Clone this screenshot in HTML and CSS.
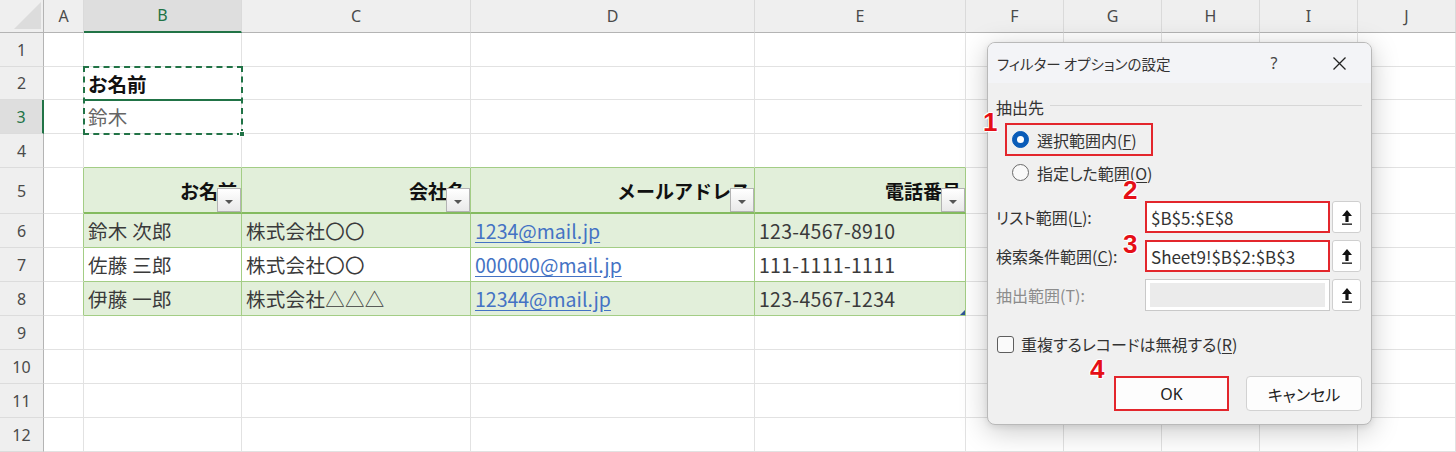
FILE: index.html
```html
<!DOCTYPE html>
<html lang="ja">
<head>
<meta charset="utf-8">
<title>フィルター オプションの設定</title>
<link rel="stylesheet" href="styles.css">
</head>
<body>
<div class="sheet">
  <div class="ch corner"><span class="tri"></span></div>
  <div class="ch">A</div>
  <div class="ch sel">B</div>
  <div class="ch">C</div>
  <div class="ch">D</div>
  <div class="ch">E</div>
  <div class="ch">F</div>
  <div class="ch">G</div>
  <div class="ch">H</div>
  <div class="ch">I</div>
  <div class="ch">J</div>

  <div class="rh">1</div>
  <div class="c"></div><div class="c"></div><div class="c"></div><div class="c"></div><div class="c"></div>
  <div class="c"></div><div class="c"></div><div class="c"></div><div class="c"></div><div class="c"></div>

  <div class="rh">2</div>
  <div class="c"></div><div class="c b">お名前</div><div class="c"></div><div class="c"></div><div class="c"></div>
  <div class="c"></div><div class="c"></div><div class="c"></div><div class="c"></div><div class="c"></div>

  <div class="rh sel">3</div>
  <div class="c"></div><div class="c g">鈴木</div><div class="c"></div><div class="c"></div><div class="c"></div>
  <div class="c"></div><div class="c"></div><div class="c"></div><div class="c"></div><div class="c"></div>

  <div class="rh">4</div>
  <div class="c"></div><div class="c tb"></div><div class="c tb"></div><div class="c tb"></div><div class="c tb"></div>
  <div class="c"></div><div class="c"></div><div class="c"></div><div class="c"></div><div class="c"></div>

  <div class="rh">5</div>
  <div class="c tl"></div>
  <div class="c t th">お名前<span class="fb"><span class="fa"></span></span></div>
  <div class="c t th">会社名<span class="fb"><span class="fa"></span></span></div>
  <div class="c t th">メールアドレス<span class="fb"><span class="fa"></span></span></div>
  <div class="c t th">電話番号<span class="fb"><span class="fa"></span></span></div>
  <div class="c"></div><div class="c"></div><div class="c"></div><div class="c"></div><div class="c"></div>

  <div class="rh">6</div>
  <div class="c tl"></div>
  <div class="c t">鈴木 次郎</div>
  <div class="c t">株式会社〇〇</div>
  <div class="c t"><span class="lnk">1234@mail.jp</span></div>
  <div class="c t">123-4567-8910</div>
  <div class="c"></div><div class="c"></div><div class="c"></div><div class="c"></div><div class="c"></div>

  <div class="rh">7</div>
  <div class="c tl"></div>
  <div class="c t w">佐藤 三郎</div>
  <div class="c t w">株式会社〇〇</div>
  <div class="c t w"><span class="lnk">000000@mail.jp</span></div>
  <div class="c t w">111-1111-1111</div>
  <div class="c"></div><div class="c"></div><div class="c"></div><div class="c"></div><div class="c"></div>

  <div class="rh">8</div>
  <div class="c tl"></div>
  <div class="c t">伊藤 一郎</div>
  <div class="c t">株式会社△△△</div>
  <div class="c t"><span class="lnk">12344@mail.jp</span></div>
  <div class="c t end">123-4567-1234<span class="rsz"></span></div>
  <div class="c"></div><div class="c"></div><div class="c"></div><div class="c"></div><div class="c"></div>

  <div class="rh">9</div>
  <div class="c"></div><div class="c"></div><div class="c"></div><div class="c"></div><div class="c"></div>
  <div class="c"></div><div class="c"></div><div class="c"></div><div class="c"></div><div class="c"></div>

  <div class="rh">10</div>
  <div class="c"></div><div class="c"></div><div class="c"></div><div class="c"></div><div class="c"></div>
  <div class="c"></div><div class="c"></div><div class="c"></div><div class="c"></div><div class="c"></div>

  <div class="rh">11</div>
  <div class="c"></div><div class="c"></div><div class="c"></div><div class="c"></div><div class="c"></div>
  <div class="c"></div><div class="c"></div><div class="c"></div><div class="c"></div><div class="c"></div>

  <div class="rh">12</div>
  <div class="c"></div><div class="c"></div><div class="c"></div><div class="c"></div><div class="c"></div>
  <div class="c"></div><div class="c"></div><div class="c"></div><div class="c"></div><div class="c"></div>

  <div class="active"></div>
  <div class="marquee"></div>
  <div class="handle"></div>
</div>

<div class="dialog">
  <div class="dtitle">
    <span class="dname">フィルター オプションの設定</span>
    <span class="dhelp">?</span>
    <span class="dclose"><svg width="15" height="15" viewBox="0 0 15 15"><path d="M1.5 1.5L13.5 13.5M13.5 1.5L1.5 13.5" stroke="#222" stroke-width="1.3" fill="none"/></svg></span>
  </div>
  <div class="dbody">
    <div class="group"><span>抽出先</span><span class="gline"></span></div>
    <div class="opt hl"><span class="radio on"></span><span>選択範囲内(<u>F</u>)</span></div>
    <div class="opt"><span class="radio"></span><span>指定した範囲(<u>O</u>)</span></div>

    <div class="field first">
      <span class="lbl">リスト範囲(<u>L</u>):</span>
      <span class="inp hl">$B$5:$E$8</span>
      <span class="upb"><svg width="14" height="18" viewBox="0 0 14 18"><path d="M7 2L12 8H8.6V14H5.4V8H2Z" fill="#111"/><rect x="2" y="15.5" width="10" height="1.3" fill="#111"/></svg></span>
    </div>
    <div class="field">
      <span class="lbl">検索条件範囲(<u>C</u>):</span>
      <span class="inp hl">Sheet9!$B$2:$B$3</span>
      <span class="upb"><svg width="14" height="18" viewBox="0 0 14 18"><path d="M7 2L12 8H8.6V14H5.4V8H2Z" fill="#111"/><rect x="2" y="15.5" width="10" height="1.3" fill="#111"/></svg></span>
    </div>
    <div class="field">
      <span class="lbl dis">抽出範囲(T):</span>
      <span class="inp dis"><span class="disfill"></span></span>
      <span class="upb"><svg width="14" height="18" viewBox="0 0 14 18"><path d="M7 2L12 8H8.6V14H5.4V8H2Z" fill="#111"/><rect x="2" y="15.5" width="10" height="1.3" fill="#111"/></svg></span>
    </div>

    <div class="chk"><span class="box"></span><span>重複するレコードは無視する(<u>R</u>)</span></div>

    <div class="btns">
      <span class="btn ok">OK</span>
      <span class="btn">キャンセル</span>
    </div>
  </div>
</div>

<span class="num n1">1</span>
<span class="num n2">2</span>
<span class="num n3">3</span>
<span class="num n4">4</span>
</body>
</html>
```
FILE: styles.css
```css
* { box-sizing: border-box; margin: 0; padding: 0; }

body {
  width: 1456px;
  height: 452px;
  overflow: hidden;
  background: #fff;
  position: relative;
  font-family: "Noto Sans CJK JP", "Noto Sans", sans-serif;
  color: #333;
}

.sheet {
  display: grid;
  grid-template-columns: 44px 40px 158px 229px 284px 211px 98px 98px 98px 98px 98px;
  grid-template-rows: 33px 34px 33px 34px 34px 46px repeat(7, 34px);
  position: relative;
}

.ch {
  background: #efefef;
  border-right: 1px solid #dadada;
  border-bottom: 1px solid #b4b4b4;
  display: flex;
  align-items: center;
  justify-content: center;
  font-family: "Noto Sans", sans-serif;
  font-size: 16px;
  color: #4a4a4a;
  padding-bottom: 1px;
}
.ch.sel {
  background: #dedede;
  color: #217346;
  border-bottom: 2px solid #217346;
}
.ch.corner {
  align-items: flex-end;
  justify-content: flex-end;
  padding: 0 2px 3px 0;
  border-right: 1px solid #b4b4b4;
}
.tri {
  width: 27px;
  height: 27px;
  background: #dcdcdc;
  clip-path: polygon(100% 0, 100% 100%, 0 100%);
}

.rh {
  background: #efefef;
  border-right: 1px solid #b4b4b4;
  border-bottom: 1px solid #dcdcdc;
  display: flex;
  align-items: center;
  justify-content: center;
  font-family: "Noto Sans", sans-serif;
  font-size: 16px;
  color: #4a4a4a;
}
.rh.sel {
  background: #dedede;
  color: #217346;
  border-right: 2px solid #217346;
}

.c {
  border-right: 1px solid #e2e2e2;
  border-bottom: 1px solid #e2e2e2;
  display: flex;
  align-items: center;
  padding: 0 4px;
  font-size: 19.5px;
  letter-spacing: 0.3px;
  color: #3a3a3a;
  white-space: nowrap;
  position: relative;
}
.c.b { font-weight: bold; color: #111; letter-spacing: 0; }
.c.g { color: #666; }
.c.tb { border-bottom-color: #a3cd85; }
.c.tl { border-right-color: #a3cd85; }
.c.t {
  background: #e2efda;
  border-right-color: #a3cd85;
  border-bottom-color: #a3cd85;
}
.c.t.w { background: #fff; }
.c.th {
  font-weight: bold;
  font-size: 19px;
  letter-spacing: 0;
  color: #111;
  justify-content: flex-end;
  padding-right: 4px;
  border-bottom: 2px solid #84bb5f;
}
.fb {
  position: absolute;
  right: 0;
  bottom: 0;
  width: 24px;
  height: 24px;
  border: 1px solid #b3b3b3;
  background: linear-gradient(#ffffff, #e9e9e9);
  display: flex;
  align-items: center;
  justify-content: center;
}
.fa {
  width: 0;
  height: 0;
  border-left: 4px solid transparent;
  border-right: 4px solid transparent;
  border-top: 4px solid #555;
  margin-top: 3px;
}
.lnk {
  color: #4472c4;
  text-decoration: underline;
  text-underline-offset: 3px;
  letter-spacing: 0;
}
.rsz {
  position: absolute;
  right: 0;
  bottom: 0;
  width: 5px;
  height: 5px;
  background: #2f5597;
  clip-path: polygon(100% 0, 100% 100%, 0 100%);
}

.active {
  position: absolute;
  left: 83px;
  top: 99px;
  width: 160px;
  height: 2px;
  background: #217346;
}
.marquee {
  position: absolute;
  left: 83px;
  top: 66px;
  width: 160px;
  height: 69px;
  border: 2px dashed #217346;
}
.handle {
  position: absolute;
  left: 239px;
  top: 131px;
  width: 6px;
  height: 6px;
  background: #217346;
  border: 1px solid #fff;
}

/* dialog */
.dialog {
  position: absolute;
  left: 987px;
  top: 42px;
  width: 385px;
  height: 383px;
  background: #f0f0f0;
  border: 1px solid #b9b9b9;
  border-radius: 8px;
  box-shadow: 0 6px 28px rgba(0, 0, 0, 0.22), 0 2px 6px rgba(0, 0, 0, 0.08);
  overflow: hidden;
  font-size: 16px;
  color: #222;
  font-feature-settings: "palt";
}
.dtitle {
  height: 40px;
  background: #f3f4f7;
  display: flex;
  align-items: center;
  padding: 0 12px 0 9px;
}
.dname {
  flex: 1;
  font-size: 14.5px;
  color: #333;
}
.dhelp {
  width: 40px;
  text-align: center;
  font-family: "Noto Sans", sans-serif;
  font-size: 16px;
  color: #444;
  margin-right: 25px;
}
.dclose {
  width: 40px;
  display: flex;
  justify-content: center;
}
.dbody {
  display: flex;
  flex-direction: column;
  padding: 0 9px 0 8px;
}
.group {
  display: flex;
  align-items: center;
  height: 22px;
  margin-top: 13px;
  color: #333;
}
.gline {
  flex: 1;
  height: 1px;
  background: #d7d7d7;
  margin-left: 6px;
  margin-top: -4px;
}
.opt {
  display: flex;
  align-items: center;
  gap: 8px;
  height: 33px;
  margin-left: 9px;
  padding-left: 5px;
  border: 2px solid transparent;
  color: #333;
  white-space: nowrap;
}
.opt.hl { border-color: #e3262c; margin-top: 5px; width: 148px; }
.radio {
  width: 17px;
  height: 17px;
  border-radius: 50%;
  border: 1px solid #6a6a6a;
  background: #f9f9f9;
  display: flex;
  align-items: center;
  justify-content: center;
  flex: none;
}
.radio.on {
  background: #0a5cb8;
  border-color: #0a5cb8;
}
.radio.on::after {
  content: "";
  width: 7px;
  height: 7px;
  border-radius: 50%;
  background: #fff;
}
u { text-underline-offset: 2px; }

.field {
  display: flex;
  align-items: center;
  height: 32px;
  margin-top: 7px;
}
.field.first { margin-top: 12px; }
.lbl { width: 149px; color: #333; white-space: nowrap; }
.lbl.dis { color: #8c8c8c; }
.inp {
  width: 185px;
  height: 32px;
  background: #fff;
  border: 1px solid #c9c9c9;
  display: flex;
  align-items: center;
  padding-left: 4px;
  font-size: 17px;
  color: #333;
  white-space: nowrap;
}
.inp.hl { border: 2px solid #e3262c; }
.inp.dis { padding: 3px 4px; }
.disfill {
  display: block;
  width: 100%;
  height: 100%;
  background: #ebebeb;
}
.upb {
  width: 29px;
  height: 32px;
  margin-left: 2px;
  background: #fff;
  border: 1px solid #cfcfcf;
  border-radius: 3px;
  display: flex;
  align-items: center;
  justify-content: center;
}

.chk {
  display: flex;
  align-items: center;
  gap: 7px;
  height: 20px;
  margin-top: 23px;
  color: #333;
  white-space: nowrap;
}
.box {
  width: 17px;
  height: 17px;
  margin-left: 1px;
  border: 1px solid #5e5e5e;
  border-radius: 3px;
  background: #fafafa;
}

.btns {
  display: flex;
  justify-content: flex-end;
  gap: 17px;
  margin-top: 22px;
}
.btn {
  width: 116px;
  height: 35px;
  background: #fdfdfd;
  border: 1px solid #d2d2d2;
  border-radius: 4px;
  display: flex;
  align-items: center;
  justify-content: center;
  color: #222;
}
.btn.ok {
  width: 115px;
  border: 2px solid #e3262c;
  border-radius: 0;
  font-family: "Noto Sans", sans-serif;
}

.num {
  position: absolute;
  font-family: "Liberation Sans", Arial, sans-serif;
  font-weight: bold;
  font-size: 26px;
  line-height: 1;
  color: #e50f17;
  text-shadow: 1px 0 #fff, -1px 0 #fff, 0 1px #fff, 0 -1px #fff, 1px 1px #fff, -1px -1px #fff;
}
.n1 { left: 983px; top: 109px; }
.n2 { left: 1123px; top: 177px; }
.n3 { left: 1123px; top: 231px; }
.n4 { left: 1090px; top: 356px; }
```
